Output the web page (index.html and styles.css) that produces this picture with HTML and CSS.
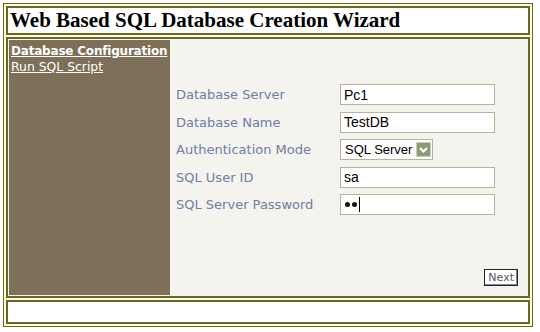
FILE: index.html
```html
<!DOCTYPE html>
<html>
<head>
<meta charset="utf-8">
<link rel="stylesheet" href="styles.css">
</head>
<body>
<div class="frame">
  <div class="cell header"><h1>Web Based SQL Database Creation Wizard</h1></div>
  <div class="cell main">
    <nav class="side">
      <a class="cur" href="#">Database Configuration</a>
      <a href="#">Run SQL Script</a>
    </nav>
    <div class="content">
      <div class="form">
        <label>Database Server</label><div class="field"><span class="inp">Pc1</span></div>
        <label>Database Name</label><div class="field"><span class="inp">TestDB</span></div>
        <label>Authentication Mode</label><div class="field"><span class="sel"><span>SQL Server</span><span class="arrow"><svg width="11" height="10" viewBox="0 0 11 10"><path d="M2 3 L5.5 6.5 L9 3" fill="none" stroke="#fff" stroke-width="2"/></svg></span></span></div>
        <label>SQL User ID</label><div class="field"><span class="inp">sa</span></div>
        <label>SQL Server Password</label><div class="field"><span class="inp pw"><span class="dot"></span><span class="dot"></span><span class="caret"></span></span></div>
      </div>
      <div class="actions"><span class="btn">Next</span></div>
    </div>
  </div>
  <div class="cell footer"></div>
</div>
</body>
</html>
```
FILE: styles.css
```css
html, body { margin: 0; padding: 0; background: #fff; }
body { width: 540px; height: 332px; overflow: hidden; }
.frame {
  margin: 3px;
  width: 530px;
  height: 324px;
  box-sizing: border-box;
  border: 1px solid #66662e;
  background: #ffffcc;
  padding: 2px;
  display: flex;
  flex-direction: column;
  gap: 2px;
}
.cell { border: 2px solid #66662e; background: #fff; box-sizing: border-box; }
.header { height: 29px; display: flex; align-items: center; padding-left: 2px; }
.header h1 {
  margin: 0;
  font-family: "Liberation Serif", serif;
  font-size: 21px;
  font-weight: bold;
  color: #000;
}
.main { flex: 1; display: flex; padding: 1px; background: #f4f3ee; }
.side {
  width: 161px;
  background: #7d6f58;
  display: flex;
  flex-direction: column;
  padding: 3px 0 0 2px;
  box-sizing: border-box;
}
.side a {
  color: #fff;
  font-family: "DejaVu Sans", Verdana, sans-serif;
  font-size: 12.4px;
  line-height: 16px;
  white-space: nowrap;
  text-decoration: underline;
}
.side a.cur { font-weight: bold; font-size: 12px; letter-spacing: -0.2px; }
.content {
  flex: 1;
  background: #f4f3ee;
  display: flex;
  flex-direction: column;
  justify-content: space-between;
  padding: 44px 9px 9px 6px;
}
.form {
  display: grid;
  grid-template-columns: 164px 155px;
  row-gap: 6.5px;
  align-items: center;
}
.form label {
  font-family: "DejaVu Sans", Verdana, sans-serif;
  font-size: 13px;
  color: #6e7ea6;
  white-space: nowrap;
}
.inp, .sel {
  display: flex;
  align-items: center;
  box-sizing: border-box;
  height: 21px;
  border: 1px solid #b4b49a;
  background: #fff;
  font-family: "Liberation Sans", Arial, sans-serif;
  font-size: 14px;
  color: #000;
  padding-left: 3px;
  white-space: nowrap;
}
.inp { width: 155px; }
.sel { width: 93px; padding-left: 4px; justify-content: space-between; padding-right: 1px; font-size: 13px; }
.arrow {
  width: 15px; height: 15px;
  background: #8e9c73;
  border: 1px solid #c8cfb6;
  box-sizing: border-box;
  display: flex; align-items: center; justify-content: center;
}
.pw { padding-left: 4px; gap: 2px; }
.dot { width: 5px; height: 5px; border-radius: 50%; background: #111; }
.caret { width: 1px; height: 15px; background: #000; margin-left: 0; }
.actions { display: flex; justify-content: flex-end; }
.btn {
  font-family: "DejaVu Sans", Verdana, sans-serif;
  font-size: 11px;
  color: #556;
  border: 1px solid #222;
  background: #fff;
  padding: 1px 3px;
  box-shadow: inset -1px -1px 0 #888;
}
.footer { height: 24px; }
```
